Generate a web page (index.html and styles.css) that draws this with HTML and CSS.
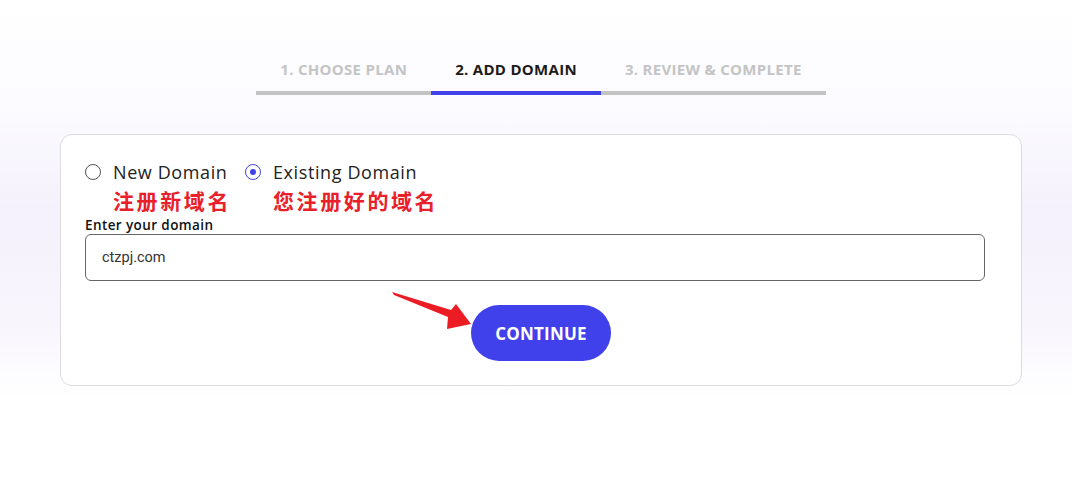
FILE: index.html
```html
<!DOCTYPE html>
<html>
  <head>
    <title>Add Domain</title>
    <link rel="stylesheet" href="styles.css">
  </head>
  <body>
    <div class="steps">
      <div class="step">1. Choose Plan</div>
      <div class="step active">2. Add Domain</div>
      <div class="step">3. Review &amp; Complete</div>
    </div>

    <div class="card">
      <div class="options">
        <label class="option">
          <span class="radio"></span>
          <span class="option-text">
            <span class="option-label">New Domain</span>
            <span class="note">注册新域名</span>
          </span>
        </label>
        <label class="option">
          <span class="radio checked"></span>
          <span class="option-text">
            <span class="option-label">Existing Domain</span>
            <span class="note">您注册好的域名</span>
          </span>
        </label>
      </div>

      <div class="field-label">Enter your domain</div>
      <div class="field">ctzpj.com</div>

      <div class="actions">
        <button class="continue">CONTINUE</button>
      </div>

      <!-- red annotation arrow pointing at the button -->
      <svg class="arrow" width="420" height="210" viewBox="0 0 420 210">
        <polygon points="331,157 390,175 395,169 410,189 386,194 387,182 333,160" fill="#ec1c24"/>
      </svg>
    </div>
  </body>
</html>
```

FILE: styles.css
```css
body {
  margin: 0;
  font-family: "Open Sans", Arial, sans-serif;
  background: linear-gradient(180deg, #fff 0px, #fbfaff 120px, #f5f1fc 210px, #f8f5fd 320px, #fff 400px, #fff 100%);
  height: 494px;
  color: #1e1e1e;
}

.steps {
  display: flex;
  justify-content: center;
  padding: 57px 0 0 10px;
}

.step {
  padding: 0 24px 10px;
  border-bottom: 4px solid #c3c3c3;
  font-size: 15px;
  font-weight: 700;
  text-transform: uppercase;
  color: #c4c4c4;
  letter-spacing: 0.3px;
  line-height: 24px;
}

.step.active {
  color: #1b1b1b;
  border-bottom-color: #4141e8;
}

.card {
  position: relative;
  margin: 39px 50px 0 60px;
  height: 252px;
  box-sizing: border-box;
  border: 1px solid #dcdbe0;
  border-radius: 12px;
  background: #fff;
  padding: 26px 36px 0 24px;
}

.options {
  display: flex;
  gap: 14px;
}

.option {
  display: flex;
  align-items: flex-start;
  gap: 12px;
}

.radio {
  width: 16px;
  height: 16px;
  margin-top: 3px;
  box-sizing: border-box;
  border: 1px solid #555;
  border-radius: 50%;
  display: flex;
  align-items: center;
  justify-content: center;
}

.radio.checked {
  border-color: #4545e0;
}

.radio.checked::after {
  content: "";
  width: 6px;
  height: 6px;
  border-radius: 50%;
  background: #4141e8;
}

.option-text {
  display: flex;
  flex-direction: column;
}

.option-label {
  font-size: 18px;
  line-height: 22px;
  letter-spacing: 0.6px;
  color: #222;
}

.note {
  font-family: "Noto Sans CJK SC", sans-serif;
  font-size: 21px;
  font-weight: 700;
  line-height: 24px;
  margin-top: 5px;
  color: #e8202a;
  letter-spacing: 2.6px;
}

.field-label {
  margin-top: 6px;
  font-size: 13.5px;
  font-weight: 600;
  line-height: 14px;
  letter-spacing: 0.4px;
  color: #111;
}

.field {
  margin-top: 2px;
  height: 47px;
  box-sizing: border-box;
  border: 1px solid #666;
  border-radius: 6px;
  padding: 0 16px;
  display: flex;
  align-items: center;
  font-family: Roboto, Arial, sans-serif;
  font-size: 14.5px;
  color: #333;
}

.actions {
  display: flex;
  justify-content: center;
  margin-top: 24px;
  padding-left: 12px;
}

.continue {
  width: 140px;
  height: 56px;
  border: none;
  border-radius: 28px;
  background: #4141eb;
  color: #fff;
  font-family: "Open Sans", Arial, sans-serif;
  font-size: 17px;
  font-weight: 700;
  letter-spacing: 0.2px;
}

.arrow {
  position: absolute;
  left: 0;
  top: 0;
  pointer-events: none;
}
```
